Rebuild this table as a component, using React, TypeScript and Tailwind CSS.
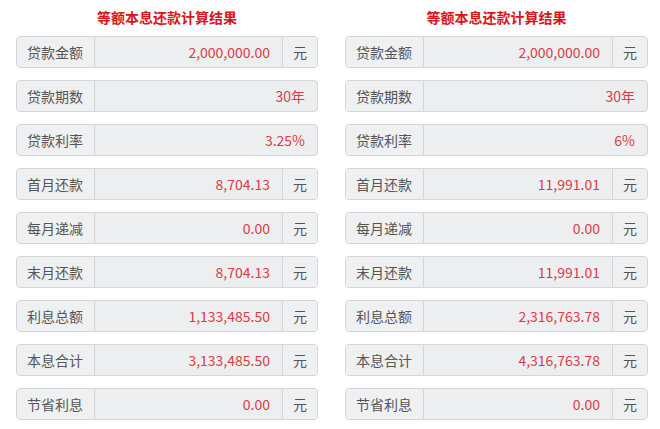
import React from "react";

type Row = { label: string; value: string; unit?: string };

const left: Row[] = [
  { label: "贷款金额", value: "2,000,000.00", unit: "元" },
  { label: "贷款期数", value: "30年" },
  { label: "贷款利率", value: "3.25%" },
  { label: "首月还款", value: "8,704.13", unit: "元" },
  { label: "每月递减", value: "0.00", unit: "元" },
  { label: "末月还款", value: "8,704.13", unit: "元" },
  { label: "利息总额", value: "1,133,485.50", unit: "元" },
  { label: "本息合计", value: "3,133,485.50", unit: "元" },
  { label: "节省利息", value: "0.00", unit: "元" },
];

const right: Row[] = [
  { label: "贷款金额", value: "2,000,000.00", unit: "元" },
  { label: "贷款期数", value: "30年" },
  { label: "贷款利率", value: "6%" },
  { label: "首月还款", value: "11,991.01", unit: "元" },
  { label: "每月递减", value: "0.00", unit: "元" },
  { label: "末月还款", value: "11,991.01", unit: "元" },
  { label: "利息总额", value: "2,316,763.78", unit: "元" },
  { label: "本息合计", value: "4,316,763.78", unit: "元" },
  { label: "节省利息", value: "0.00", unit: "元" },
];

function Panel({ rows, w }: { rows: Row[]; w: string }) {
  return (
    <div className={`flex flex-col ${w}`}>
      <div className="h-[36px] flex items-center justify-center text-[14px] font-bold text-[#d9141b] pb-[1px]">
        等额本息还款计算结果
      </div>
      <div className="flex flex-col gap-[12px]">
        {rows.map((r) => (
          <div
            key={r.label}
            className="flex h-[32px] rounded-[4px] border border-[#d3d6d9] bg-[#eceef0] text-[14px] overflow-hidden"
          >
            <div className="w-[78px] shrink-0 flex items-center pl-[10px] text-[#555] border-r border-[#d3d6d9] bg-[#eef0f1]">
              {r.label}
            </div>
            <div className="flex-1 flex items-center justify-end pr-[12px] text-[#dc3b44]">
              {r.value}
            </div>
            {r.unit && (
              <div className="w-[35px] shrink-0 flex items-center justify-center text-[#555] border-l border-[#d3d6d9] bg-[#eef0f1]">
                {r.unit}
              </div>
            )}
          </div>
        ))}
      </div>
    </div>
  );
}

export default function App() {
  return (
    <div
      className="w-[660px] h-[429px] bg-white flex pl-[16px] gap-[27px]"
      style={{ fontFamily: '"Noto Sans CJK SC", "Noto Sans", sans-serif' }}
    >
      <Panel rows={left} w="w-[302px]" />
      <Panel rows={right} w="w-[303px]" />
    </div>
  );
}
